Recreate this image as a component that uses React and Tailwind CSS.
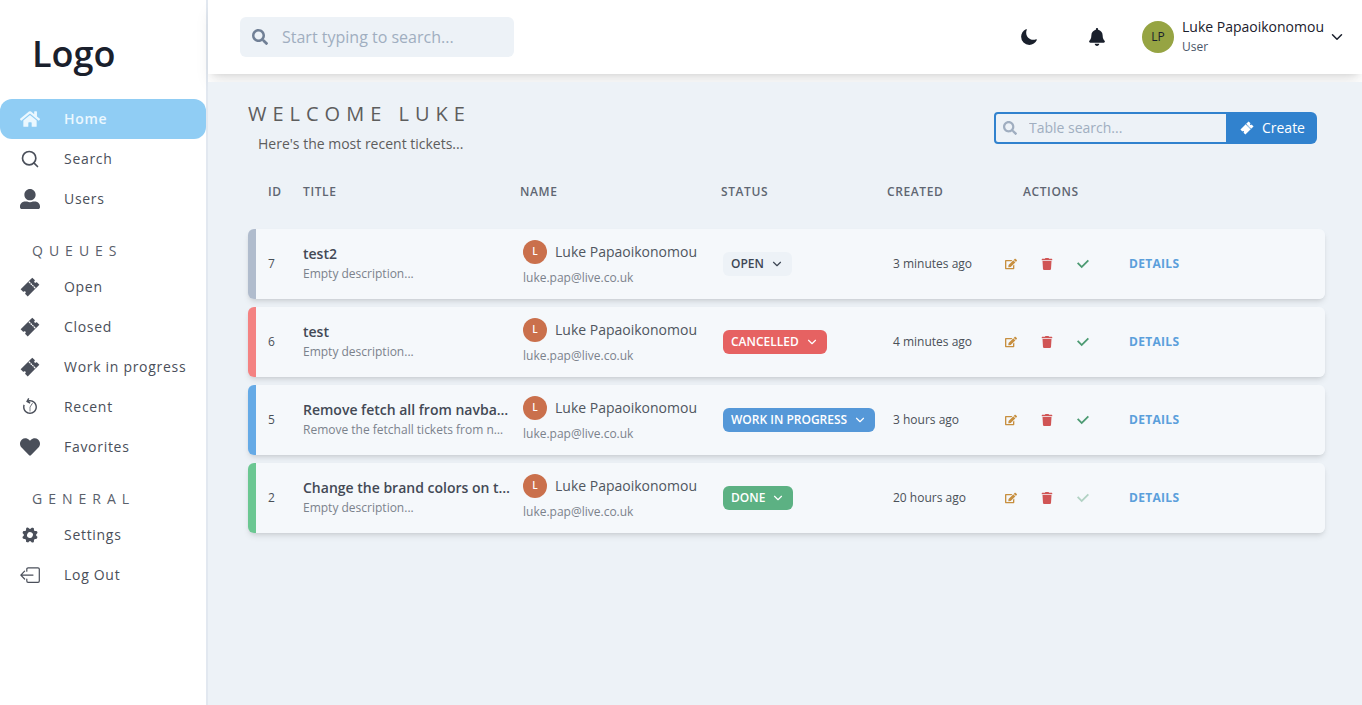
import {
  FaBell,
  FaEdit,
  FaHeart,
  FaHome,
  FaSearch,
  FaTrash,
  FaUserAlt,
} from "react-icons/fa";
import { FiChevronDown, FiSearch } from "react-icons/fi";
import { GiBackwardTime } from "react-icons/gi";
import { IoMoon, IoTicketSharp } from "react-icons/io5";
import { BsGearFill } from "react-icons/bs";

function GearIcon() {
  return (
    <span className="flex size-5 items-center justify-center">
      <BsGearFill className="size-4 rotate-[22.5deg]" />
    </span>
  );
}

function LogOutIcon() {
  return (
    <svg viewBox="0 0 20 20" className="size-5" fill="none" stroke="currentColor" strokeWidth="1.2" strokeLinecap="round" strokeLinejoin="round" aria-hidden="true">
      <path d="M6.8 6.2V4.1a1.3 1.3 0 0 1 1.3-1.3H18a1.3 1.3 0 0 1 1.3 1.3v12a1.3 1.3 0 0 1-1.3 1.3H8.1a1.3 1.3 0 0 1-1.3-1.3V14" />
      <path d="M13 10.1H.8M4.6 6.2.8 10.1 4.6 14" />
    </svg>
  );
}

function CheckIcon() {
  return (
    <svg viewBox="0 0 14 14" className="size-3" fill="currentColor" aria-hidden="true">
      <polygon points="5.5 12 14 3.5 12.5 2 5.5 9 1.5 5 0 6.5" />
    </svg>
  );
}

const NAV = [
  {
    items: [
      { label: "Home", Icon: FaHome, active: true },
      { label: "Search", Icon: FiSearch },
      { label: "Users", Icon: FaUserAlt },
    ],
  },
  {
    heading: "QUEUES",
    items: [
      { label: "Open", Icon: IoTicketSharp },
      { label: "Closed", Icon: IoTicketSharp },
      { label: "Work in progress", Icon: IoTicketSharp },
      { label: "Recent", Icon: GiBackwardTime },
      { label: "Favorites", Icon: FaHeart },
    ],
  },
  {
    heading: "GENERAL",
    items: [
      { label: "Settings", Icon: GearIcon },
      { label: "Log Out", Icon: LogOutIcon },
    ],
  },
];

const TICKETS = [
  {
    id: 7,
    title: "test2",
    description: "Empty description...",
    status: "OPEN",
    created: "3 minutes ago",
    edge: "border-[#b0bccd]",
    badge: "bg-[#edf2f7] text-[#3d4654]",
  },
  {
    id: 6,
    title: "test",
    description: "Empty description...",
    status: "CANCELLED",
    created: "4 minutes ago",
    edge: "border-[#f48282]",
    badge: "bg-[#e66262] text-white",
  },
  {
    id: 5,
    title: "Remove fetch all from navba…",
    description: "Remove the fetchall tickets from n…",
    status: "WORK IN PROGRESS",
    created: "3 hours ago",
    edge: "border-[#65aae6]",
    badge: "bg-[#5598d8] text-white",
  },
  {
    id: 2,
    title: "Change the brand colors on t…",
    description: "Empty description...",
    status: "DONE",
    created: "20 hours ago",
    edge: "border-[#6bc792]",
    badge: "bg-[#5cb183] text-white",
    resolved: true,
  },
];

function NavItem({ label, Icon, active }) {
  return (
    <li>
      <a
        href="#"
        aria-current={active ? "page" : undefined}
        className={
          "flex h-10 items-center gap-6 rounded-xl pl-5 text-sm tracking-wider whitespace-nowrap " +
          (active ? "bg-[#90cdf4] font-semibold text-[#ebf8ff]" : "text-[#4a4f5a]")
        }
      >
        <Icon className="size-5 shrink-0" />
        {label}
      </a>
    </li>
  );
}

function Sidebar() {
  return (
    <aside className="w-52 shrink-0 border-r-2 border-[#e2e8f0] bg-white">
      <h1 className="flex h-[99px] items-center pt-2 pl-8 text-4xl font-semibold text-[#1a202c]">Logo</h1>
      <nav>
        {NAV.map(({ heading, items }) => (
          <section key={items[0].label}>
            {heading && (
              <h2 className="flex h-12 items-center pt-4 pl-8 text-sm tracking-[6px] text-[#5a606b]">{heading}</h2>
            )}
            <ul>
              {items.map((item) => (
                <NavItem key={item.label} {...item} />
              ))}
            </ul>
          </section>
        ))}
      </nav>
    </aside>
  );
}

function Topbar() {
  return (
    <header className="relative mb-2 flex h-[74px] items-center justify-between bg-white pr-4 pl-8 shadow-lg">
      <label className="flex h-10 w-[274px] items-center gap-3.5 rounded-md bg-[#edf2f7] px-3">
        <FaSearch className="size-4 shrink-0 text-[#718096]" />
        <input
          type="search"
          aria-label="Search"
          placeholder="Start typing to search..."
          className="w-full min-w-0 bg-transparent text-base outline-none placeholder:text-[#a0aec0]"
        />
      </label>
      <div className="flex items-center text-[#1a202c]">
        <button type="button" aria-label="Toggle dark mode" className="mr-[50px]">
          <IoMoon className="size-[18px]" />
        </button>
        <button type="button" aria-label="Notifications" className="mr-9">
          <FaBell className="size-[18px]" />
        </button>
        <button type="button" className="flex items-center gap-1 text-left">
          <span className="mr-1 flex size-8 items-center justify-center rounded-full bg-[#96a443] text-xs">LP</span>
          <span className="flex flex-col">
            <span className="text-sm">Luke Papaoikonomou</span>
            <span className="text-xs leading-5 text-[#4a5568]">User</span>
          </span>
          <FiChevronDown className="size-[18px]" />
        </button>
      </div>
    </header>
  );
}

function TicketRow({ ticket }) {
  return (
    <tr className="rounded-md text-xs text-[#4a5058] shadow-md *:bg-[#f5f8fb]">
      <td className={"h-[70px] rounded-l-md border-l-8 pl-3 " + ticket.edge}>{ticket.id}</td>
      <td>
        <p className="text-sm font-semibold whitespace-nowrap text-[#434955]">{ticket.title}</p>
        <p className="leading-5 whitespace-nowrap text-[#7b828c]">{ticket.description}</p>
      </td>
      <td className="pl-[3px]">
        <div className="flex items-center gap-2">
          <span className="flex size-6 items-center justify-center rounded-full bg-[#ca704c] text-[10px] font-semibold text-white">
            L
          </span>
          <span className="text-sm whitespace-nowrap text-[#50565f]">Luke Papaoikonomou</span>
        </div>
        <p className="pt-1 leading-5 text-[#7b828c]">luke.pap@live.co.uk</p>
      </td>
      <td className="pl-0.5">
        <button
          type="button"
          className={"flex h-6 items-center gap-1.5 rounded-md px-2 font-semibold whitespace-nowrap " + ticket.badge}
        >
          {ticket.status}
          <FiChevronDown className="size-3.5" />
        </button>
      </td>
      <td className="pl-1.5">{ticket.created}</td>
      <td>
        <div className="flex items-center gap-6">
          <button type="button" aria-label="Edit ticket" className="text-[#c78f3f]">
            <FaEdit className="size-3" />
          </button>
          <button type="button" aria-label="Delete ticket" className="text-[#d05555]">
            <FaTrash className="size-3" />
          </button>
          <button
            type="button"
            aria-label="Mark as done"
            disabled={ticket.resolved}
            className="text-[#4c9a72] disabled:opacity-40"
          >
            <CheckIcon />
          </button>
        </div>
      </td>
      <td className="rounded-r-md">
        <a href="#" className="font-bold tracking-wide text-[#5b9fdb]">
          DETAILS
        </a>
      </td>
    </tr>
  );
}

export default function App() {
  return (
    <div className="flex min-h-screen bg-white font-['Open_Sans',sans-serif]">
      <Sidebar />
      <div className="flex min-w-0 grow flex-col">
        <Topbar />
        <main className="relative grow bg-[#edf2f7] pr-[37px] pl-10">
          <div className="flex items-center justify-between pt-4 pr-2">
            <div>
              <h2 className="text-xl leading-8 tracking-[6px] text-[#5d5d5d]">WELCOME LUKE</h2>
              <p className="pl-2.5 text-sm leading-7 text-[#5d5d5d]">Here's the most recent tickets...</p>
            </div>
            <div className="flex h-8">
              <label className="flex w-[234px] items-center gap-3 rounded-l-sm border-2 border-[#3182ce] px-[7px]">
                <FaSearch className="size-3.5 shrink-0 text-[#a0aec0]" />
                <input
                  type="search"
                  aria-label="Table search"
                  placeholder="Table search..."
                  className="w-full min-w-0 bg-transparent text-sm outline-none placeholder:text-[#a0aec0]"
                />
              </label>
              <button
                type="button"
                className="flex items-center gap-2 rounded-r-md bg-[#3182ce] px-3 text-sm font-medium text-white"
              >
                <IoTicketSharp className="size-3.5" />
                Create
              </button>
            </div>
          </div>
          <table className="mt-[18px] w-full table-fixed border-separate border-spacing-x-0 border-spacing-y-2 text-left">
            <colgroup>
              <col className="w-[55px]" />
              <col className="w-[217px]" />
              <col className="w-[201px]" />
              <col className="w-[166px]" />
              <col className="w-[118px]" />
              <col className="w-[124px]" />
              <col />
            </colgroup>
            <thead>
              <tr className="h-[37px] align-top text-xs text-[#5f6672] *:font-semibold *:tracking-wider">
                <th scope="col" className="pl-5">ID</th>
                <th scope="col">TITLE</th>
                <th scope="col">NAME</th>
                <th scope="col">STATUS</th>
                <th scope="col">CREATED</th>
                <th scope="col" className="pl-[18px]">ACTIONS</th>
                <td />
              </tr>
            </thead>
            <tbody>
              {TICKETS.map((ticket) => (
                <TicketRow key={ticket.id} ticket={ticket} />
              ))}
            </tbody>
          </table>
        </main>
      </div>
    </div>
  );
}
